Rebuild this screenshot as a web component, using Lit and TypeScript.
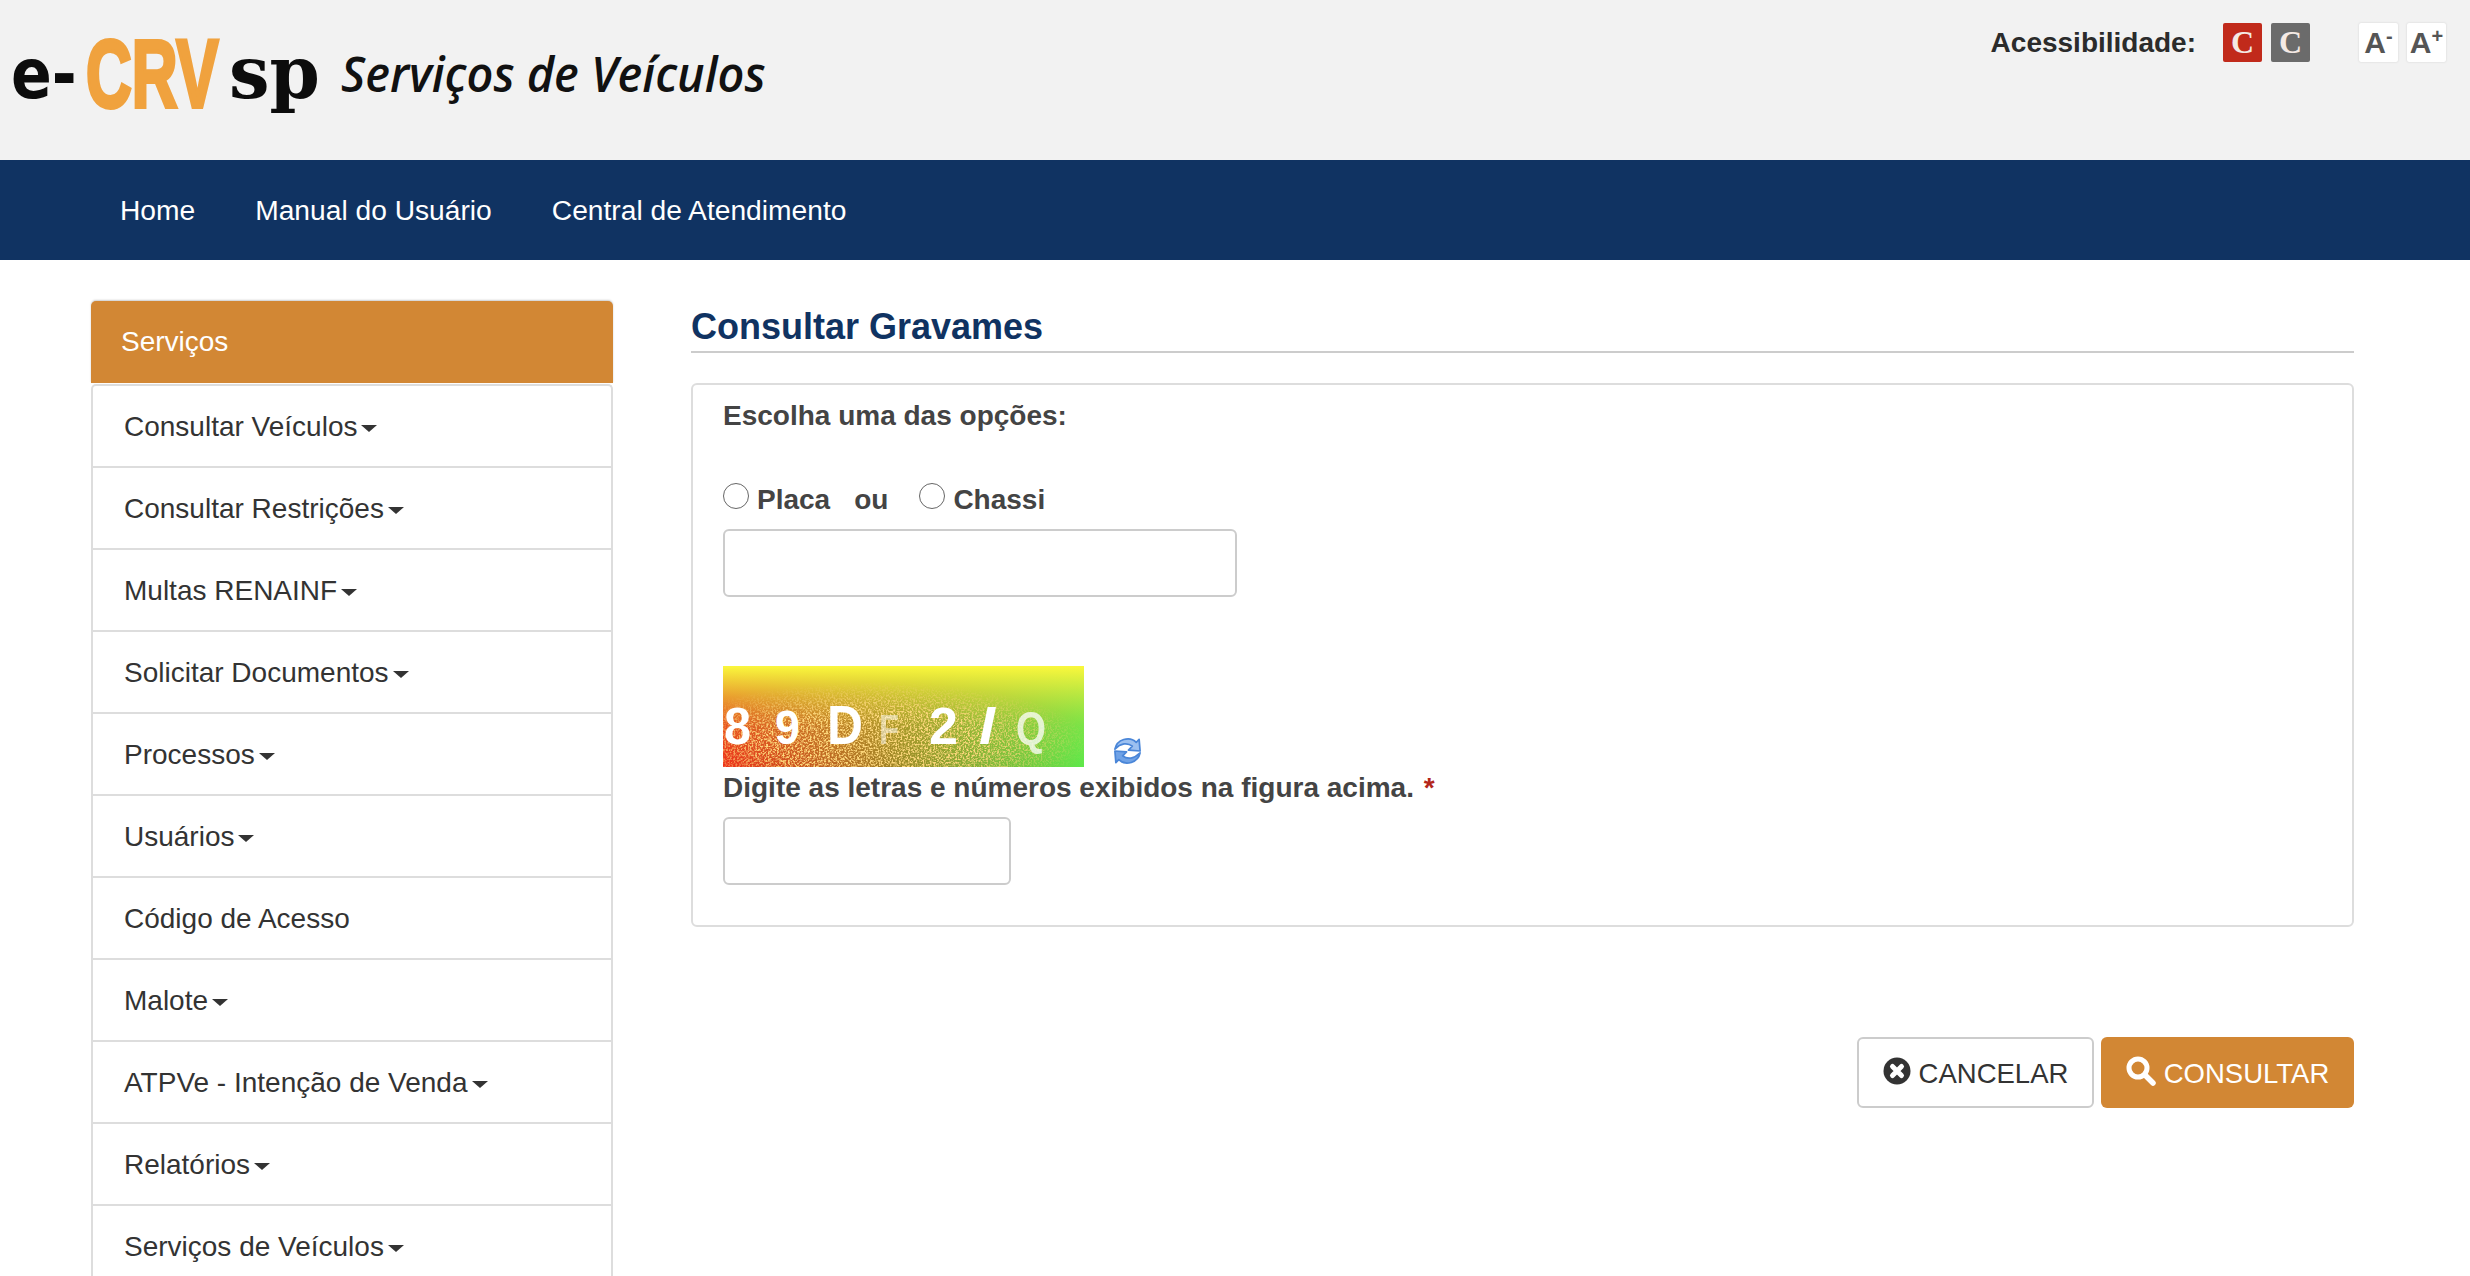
import { LitElement, html, css, svg } from 'lit';
import { customElement } from 'lit/decorators.js';

const menu: [string, boolean][] = [
  ['Consultar Veículos', true],
  ['Consultar Restrições', true],
  ['Multas RENAINF', true],
  ['Solicitar Documentos', true],
  ['Processos', true],
  ['Usuários', true],
  ['Código de Acesso', false],
  ['Malote', true],
  ['ATPVe - Intenção de Venda', true],
  ['Relatórios', true],
  ['Serviços de Veículos', true],
];

// the logo is squeezed with scale() so every word keeps its own box
const logo = svg`
  <svg class="logo" width="780" height="120" viewBox="0 0 780 120">
    <text transform="translate(11 86) scale(.86 1)" font-family="DejaVu Sans" font-weight="700" font-size="70" fill="#0c0c0c">e-</text>
    <text transform="translate(86 95) scale(.66 1)" font-family="Liberation Sans" font-weight="700" font-size="96" fill="#f0a23e" stroke="#f0a23e" stroke-width="4">CRV</text>
    <text transform="translate(229 86) scale(1 1)" font-family="DejaVu Serif" font-weight="700" font-size="72" fill="#0c0c0c">sp</text>
    <text transform="translate(341 80) scale(.975 1)" font-family="Open Sans" font-style="italic" font-weight="600" font-size="48" fill="#111">Serviços de Veículos</text>
  </svg>`;

const captcha = svg`
  <svg class="captcha" width="361" height="101" viewBox="0 0 361 101">
    <defs>
      <linearGradient id="h" x1="0" x2="1" y1="0" y2="0">
        <stop offset="0" stop-color="#ee2f1a"/>
        <stop offset="0.5" stop-color="#9a8a26"/>
        <stop offset="1" stop-color="#5ee84a"/>
      </linearGradient>
      <linearGradient id="v" x1="0" x2="0" y1="0" y2="1">
        <stop offset="0" stop-color="#fbf83c" stop-opacity="1"/>
        <stop offset="0.6" stop-color="#d8d83c" stop-opacity="0.22"/>
        <stop offset="1" stop-color="#d8d83c" stop-opacity="0"/>
      </linearGradient>
      <filter id="noise" x="0" y="0" width="100%" height="100%">
        <feTurbulence type="fractalNoise" baseFrequency="0.55" numOctaves="2" seed="4"/>
        <feColorMatrix values="0 0 0 0 0.98  0 0 0 0 0.68  0 0 0 0 0.2  4 0 0 0 -1.7"/>
      </filter>
      <radialGradient id="fade" cx="0.42" cy="0.75" r="0.6">
        <stop offset="0.5" stop-color="#fff"/>
        <stop offset="1" stop-color="#000"/>
      </radialGradient>
      <mask id="m"><rect width="361" height="101" fill="url(#fade)"/></mask>
    </defs>
    <rect width="361" height="101" fill="url(#h)"/>
    <rect width="361" height="101" fill="url(#v)"/>
    <rect width="361" height="101" filter="url(#noise)" mask="url(#m)"/>
    <g font-family="Liberation Sans" fill="#fff">
      <text x="1" y="78" font-size="52" font-weight="700" textLength="27" lengthAdjust="spacingAndGlyphs">8</text>
      <text x="52" y="78" font-size="48" font-weight="700" textLength="25" lengthAdjust="spacingAndGlyphs">9</text>
      <text x="104" y="78" font-size="56" font-weight="700" textLength="36" lengthAdjust="spacingAndGlyphs">D</text>
      <text x="156" y="78" font-size="42" opacity="0.5" textLength="20" lengthAdjust="spacingAndGlyphs">F</text>
      <text x="206" y="78" font-size="52" font-weight="700" textLength="29" lengthAdjust="spacingAndGlyphs">2</text>
      <text x="256" y="78" font-size="54" font-weight="700" font-style="italic" textLength="16" lengthAdjust="spacingAndGlyphs">I</text>
      <text x="293" y="78" font-size="46" opacity="0.75" textLength="30" lengthAdjust="spacingAndGlyphs">Q</text>
    </g>
  </svg>`;

const refresh = svg`
  <svg class="refresh" width="31" height="32" viewBox="0 0 32 32">
    <path d="M3 14C5 4 18 0 25 7l3-3 1 12-12-1 4-4c-5-4-12-3-18 3z" fill="#9cc0f0" stroke="#4a86d8" stroke-width="1.8" stroke-linejoin="round"/>
    <path d="M29 18c-2 10-15 14-22 7l-3 3-1-12 12 1-4 4c5 4 12 3 18-3z" fill="#6fa2e6" stroke="#4a86d8" stroke-width="1.8" stroke-linejoin="round"/>
  </svg>`;

const cancelIcon = svg`
  <svg class="ico" width="28" height="28" viewBox="0 0 28 28">
    <circle cx="14" cy="14" r="13.5" fill="#333"/>
    <path d="M9.5 9.5l9 9M18.5 9.5l-9 9" stroke="#fff" stroke-width="5" stroke-linecap="round"/>
  </svg>`;

const searchIcon = svg`
  <svg class="ico" width="30" height="30" viewBox="0 0 30 30">
    <circle cx="12" cy="12" r="9" fill="none" stroke="#fff" stroke-width="5"/>
    <path d="M19 19l8 8" stroke="#fff" stroke-width="5.5" stroke-linecap="round"/>
  </svg>`;

@customElement('app-root')
export class AppRoot extends LitElement {
  static styles = css`
    :host {
      display: block;
      height: 1276px;
      overflow: hidden;
      background: #fff;
      color: #333;
      font-family: 'Liberation Sans', Arial, sans-serif;
      font-size: 28px;
    }

    .top {
      height: 160px;
      background: #f2f2f2;
      display: flex;
      justify-content: space-between;
      align-items: flex-start;
      padding-right: 24px;
      box-sizing: border-box;
    }
    .logo {
      display: block;
      margin-top: 12px;
    }
    .access {
      display: flex;
      align-items: center;
      margin-top: 23px;
      height: 39px;
    }
    .access-label {
      font-weight: 700;
      font-size: 28px;
      color: #2b2b2b;
      margin-right: 27px;
    }
    .box {
      width: 39px;
      height: 39px;
      display: flex;
      align-items: center;
      justify-content: center;
      box-sizing: border-box;
      border-radius: 2px;
      font-weight: 700;
    }
    .contrast {
      color: #f4e9e4;
      font-family: 'Liberation Serif', serif;
      font-size: 32px;
      margin-right: 9px;
    }
    .red { background: #c12a1b; }
    .gray { background: #6b6b6b; margin-right: 40px; }
    .font {
      background: #fff;
      color: #555;
      box-shadow: 0 0 2px #ccc;
      font-size: 30px;
      margin-left: 9px;
    }
    .font sup {
      font-size: 20px;
      line-height: 0;
      margin-top: -14px;
    }

    nav {
      height: 100px;
      background: #103362;
      display: flex;
      align-items: center;
      padding-left: 90px;
    }
    nav a {
      color: #fff;
      padding: 0 30px;
      font-size: 28.2px;
    }

    main {
      display: grid;
      grid-template-columns: 522px 1fr;
      column-gap: 78px;
      padding: 41px 116px 0 91px;
    }

    .panel-head {
      height: 82px;
      background: #d28734;
      color: #fff;
      display: flex;
      align-items: center;
      padding-left: 30px;
      border-radius: 5px 5px 0 0;
      box-shadow: 0 -1px 2px #ccc;
      margin-bottom: 1px;
    }
    .menu {
      border: 2px solid #ddd;
      border-bottom: 0;
      border-radius: 5px 5px 0 0;
    }
    .menu-item {
      height: 82px;
      box-sizing: border-box;
      border-bottom: 2px solid #ddd;
      display: flex;
      align-items: center;
      padding: 2px 0 0 31px;
      color: #333;
    }
    .caret {
      width: 0;
      height: 0;
      margin-left: 4px;
      margin-top: 3px;
      border-top: 7px solid #333;
      border-left: 8px solid transparent;
      border-right: 8px solid transparent;
    }

    h1 {
      margin: 0 0 30px;
      height: 50px;
      line-height: 52px;
      font-size: 36px;
      font-weight: 700;
      color: #103362;
      border-bottom: 2px solid #ccc;
    }
    .form-box {
      height: 544px;
      box-sizing: border-box;
      border: 2px solid #ddd;
      border-radius: 6px;
      padding: 13px 30px 0;
      font-weight: 700;
      color: #444;
    }
    .choose {
      line-height: 36px;
      margin-bottom: 44px;
    }
    .radios {
      display: flex;
      align-items: center;
      height: 40px;
      margin-bottom: 11px;
    }
    .radios span { padding-top: 3px; }
    .radios input {
      appearance: none;
      width: 26px;
      height: 26px;
      margin: -4px 8px 0 0;
      border: 1.5px solid #666;
      border-radius: 50%;
      background: #fff;
    }
    .or { margin: 0 31px 0 24px; }
    .field {
      display: block;
      box-sizing: border-box;
      height: 68px;
      background: #fff;
      border: 2px solid #ccc;
      border-radius: 6px;
    }
    .field.wide { width: 514px; }
    .field.small { width: 288px; }
    .captcha-row {
      display: flex;
      align-items: flex-end;
      margin-top: 69px;
    }
    .captcha { display: block; }
    .refresh { margin: 0 0 0 28px; }
    .hint {
      line-height: 36px;
      margin: 3px 0 11px;
    }
    .req { color: #b3261a; margin-left: 2px; }

    .actions {
      display: flex;
      justify-content: flex-end;
      gap: 7px;
      margin-top: 110px;
    }
    .btn {
      height: 71px;
      box-sizing: border-box;
      display: flex;
      align-items: center;
      gap: 8px;
      border-radius: 6px;
      font-size: 27.5px;
      font-family: inherit;
      padding: 3px 0 0;
      justify-content: center;
    }
    .ico { margin-top: -7px; }
    .cancel {
      width: 237px;
      background: #fff;
      color: #333;
      border: 2px solid #ccc;
    }
    .submit {
      width: 253px;
      background: #d28734;
      color: #fff;
      border: 0;
    }
  `;

  render() {
    return html`
      <header class="top">
        ${logo}
        <div class="access">
          <span class="access-label">Acessibilidade:</span>
          <span class="box contrast red">C</span>
          <span class="box contrast gray">C</span>
          <span class="box font">A<sup>-</sup></span>
          <span class="box font">A<sup>+</sup></span>
        </div>
      </header>
      <nav>
        <a>Home</a>
        <a>Manual do Usuário</a>
        <a>Central de Atendimento</a>
      </nav>
      <main>
        <aside>
          <div class="panel-head">Serviços</div>
          <div class="menu">
            ${menu.map(([label, sub]) => html`
              <div class="menu-item">${label}${sub ? html`<span class="caret"></span>` : ''}</div>
            `)}
          </div>
        </aside>
        <section>
          <h1>Consultar Gravames</h1>
          <div class="form-box">
            <div class="choose">Escolha uma das opções:</div>
            <div class="radios">
              <input type="radio" name="tipo" />
              <span>Placa</span>
              <span class="or">ou</span>
              <input type="radio" name="tipo" />
              <span>Chassi</span>
            </div>
            <input class="field wide" type="text" />
            <div class="captcha-row">${captcha}${refresh}</div>
            <div class="hint">Digite as letras e números exibidos na figura acima. <span class="req">*</span></div>
            <input class="field small" type="text" />
          </div>
          <div class="actions">
            <button class="btn cancel">${cancelIcon}CANCELAR</button>
            <button class="btn submit">${searchIcon}CONSULTAR</button>
          </div>
        </section>
      </main>
    `;
  }
}
